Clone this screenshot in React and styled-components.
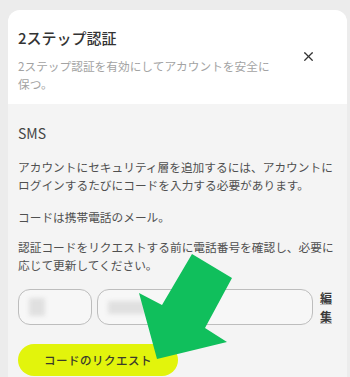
import React from 'react';
import styled, { createGlobalStyle } from 'styled-components';
import { X } from 'lucide-react';

const GlobalStyle = createGlobalStyle`
  html, body {
    margin: 0;
    padding: 0;
    background: #ececec;
    font-family: "Noto Sans CJK JP", "Noto Sans", sans-serif;
  }
`;

const Page = styled.div`
  position: relative;
  width: 350px;
  height: 377px;
  overflow: hidden;
  padding: 10px 3px 0 8px;
  box-sizing: border-box;
`;

const Modal = styled.div`
  background: #f4f4f4;
  border-radius: 12px 12px 0 0;
  overflow: hidden;
  height: 100%;
`;

const Header = styled.div`
  display: flex;
  justify-content: space-between;
  background: #ffffff;
  padding: 18px 29px 11px 10px;
`;

const HeaderText = styled.div`
  display: flex;
  flex-direction: column;
  gap: 9px;
`;

const Title = styled.h2`
  margin: 0;
  font-size: 15px;
  line-height: 20px;
  font-weight: 500;
  color: #333333;
`;

const Subtitle = styled.p`
  margin: 0;
  font-size: 11.7px;
  line-height: 18px;
  color: #a3a3a3;
`;

const CloseButton = styled.button`
  display: flex;
  align-items: center;
  justify-content: center;
  width: 20px;
  height: 20px;
  margin-top: 18px;
  padding: 0;
  border: none;
  background: none;
  color: #333333;
`;

const Body = styled.div`
  padding: 20px 12px 0 10px;
`;

const SectionTitle = styled.h3`
  margin: 0 0 16px;
  font-size: 14px;
  line-height: 18px;
  font-weight: 400;
  color: #444444;
`;

const Paragraph = styled.p`
  margin: 0 0 ${(p) => p.$gap || 14}px;
  font-size: 11.7px;
  line-height: 18px;
  color: #505050;
  white-space: nowrap;
`;

const PhoneRow = styled.div`
  display: flex;
  align-items: center;
  gap: 5px;
  margin-top: 10px;
`;

const Field = styled.div`
  display: flex;
  align-items: center;
  box-sizing: border-box;
  width: ${(p) => p.$width}px;
  height: 36px;
  padding: 0 10px;
  border: 1.5px solid #bdbdbd;
  border-radius: 12px;
  background: #f7f7f7;
`;

const Blurred = styled.span`
  display: block;
  width: ${(p) => p.$width}px;
  height: ${(p) => p.$height}px;
  background: #e0e0e0;
  filter: blur(2px);
  border-radius: 2px;
`;

const EditLink = styled.a`
  width: 13px;
  margin-left: 2px;
  font-size: 12px;
  line-height: 19px;
  font-weight: 700;
  color: #3a3a3a;
  text-decoration: underline;
  text-decoration-color: #bbbbbb;
  word-break: break-all;
`;

const RequestButton = styled.button`
  display: block;
  width: 160px;
  height: 32px;
  margin-top: 18px;
  border: none;
  border-radius: 16px;
  background: #e2f40c;
  font-family: inherit;
  font-size: 11.5px;
  font-weight: 500;
  color: #3b3b2b;
  letter-spacing: 0.5px;
`;

const ArrowOverlay = styled.svg`
  position: absolute;
  left: 0;
  top: 0;
  pointer-events: none;
`;

export default function App() {
  return (
    <>
      <GlobalStyle />
      <Page>
        <Modal>
          <Header>
            <HeaderText>
              <Title>2ステップ認証</Title>
              <Subtitle>
                2ステップ認証を有効にしてアカウントを安全に
                <br />
                保つ。
              </Subtitle>
            </HeaderText>
            <CloseButton aria-label="閉じる">
              <X size={15} strokeWidth={2} />
            </CloseButton>
          </Header>
          <Body>
            <SectionTitle>SMS</SectionTitle>
            <Paragraph>
              アカウントにセキュリティ層を追加するには、アカウントに
              <br />
              ログインするたびにコードを入力する必要があります。
            </Paragraph>
            <Paragraph $gap={12}>コードは携帯電話のメール。</Paragraph>
            <Paragraph $gap={0}>
              認証コードをリクエストする前に電話番号を確認し、必要に
              <br />
              応じて更新してください。
            </Paragraph>
            <PhoneRow>
              <Field $width={74}>
                <Blurred $width={16} $height={18} />
              </Field>
              <Field $width={216}>
                <Blurred $width={38} $height={13} />
              </Field>
              <EditLink>編集</EditLink>
            </PhoneRow>
            <RequestButton>コードのリクエスト</RequestButton>
          </Body>
        </Modal>
        <ArrowOverlay width="350" height="377" viewBox="0 0 350 377">
          <polygon
            points="192,254 232,278 205,328 227,342 157,359 139,293 162,305"
            fill="#10bf5c"
          />
        </ArrowOverlay>
      </Page>
    </>
  );
}
